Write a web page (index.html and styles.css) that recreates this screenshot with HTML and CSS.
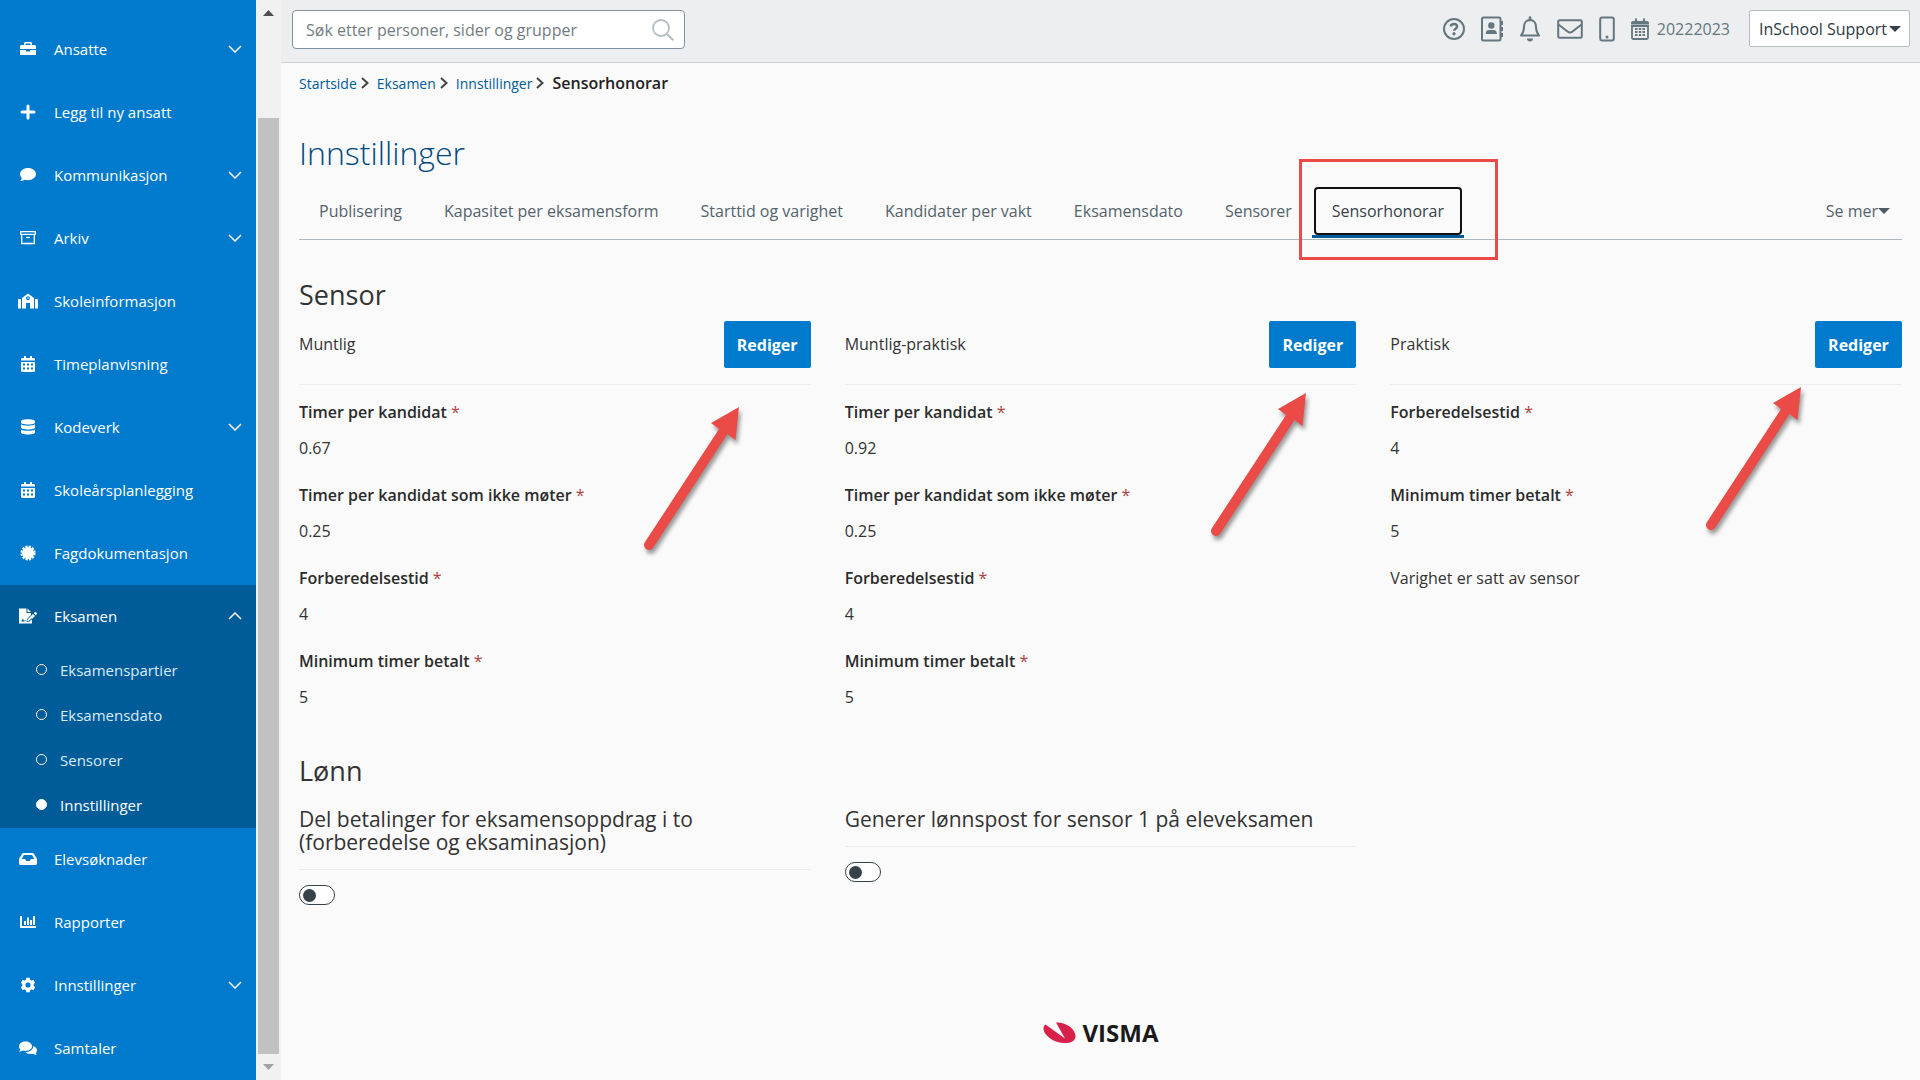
FILE: index.html
```
<!DOCTYPE html>
<html lang="no">
<head>
  <meta charset="UTF-8">
  <title>Sensorhonorar - Innstillinger</title>
  <link rel="stylesheet" href="styles.css">
</head>
<body>

  <!-- shared icons -->
  <svg class="sprite" aria-hidden="true">
    <symbol id="chevron" viewBox="0 0 14 8"><path d="M1 1l6 6 6-6" fill="none" stroke="currentColor" stroke-width="1.5"/></symbol>
    <symbol id="calendar" viewBox="0 0 14 16"><path fill="currentColor" fill-rule="evenodd" d="M0 4.5V3.4C0 2.600 .6 2 1.500 2H3V.5C3 .2 3.200 0 3.500 0h1c.3 0 .5.2.5.5V2h4V.5c0-.3.2-.5.5-.5h1c.3 0 .5.2.5.5V2h1.500c.9 0 1.500.6 1.500 1.400v1.100zM0 6h14v8.500c0 .9-.6 1.500-1.500 1.500h-11C.6 16 0 15.400 0 14.500zM2 7.500v2h2v-2zm4 0v2h2v-2zm4 0v2h2v-2zM2 11.500v2h2v-2zm4 0v2h2v-2zm4 0v2h2v-2z"/></symbol>
    <symbol id="pointer" viewBox="0 0 110 160"><path fill="#ea4b46" d="M97 8L93.500 41 85.500 35 11 149a5 5 0 0 1-8-6L77 30l-8-6z"/></symbol>
  </svg>

  <aside class="sidebar">
    <nav class="menu">
      <a href="#" class="menu-item">
        <svg class="menu-icon" viewBox="0 0 20 16"><path fill="#fff" fill-rule="evenodd" d="M6 4V2.500C6 1.700 6.700 1 7.500 1h5c.8 0 1.500.7 1.500 1.500V4h2.500C17.300 4 18 4.700 18 5.500V8H2V5.500C2 4.700 2.700 4 3.500 4zm1.500 0h5V2.500h-5zM2 9h6v1.500h4V9h6v4c0 .6-.4 1-1 1H3c-.6 0-1-.4-1-1z"/></svg>
        <span>Ansatte</span>
        <svg class="chevron"><use href="#chevron"/></svg>
      </a>
      <a href="#" class="menu-item">
        <svg class="menu-icon" viewBox="0 0 20 16"><path d="M10 2v12M4 8h12" stroke="#fff" stroke-width="3" stroke-linecap="round"/></svg>
        <span>Legg til ny ansatt</span>
      </a>
      <a href="#" class="menu-item">
        <svg class="menu-icon" viewBox="0 0 20 16"><path fill="#fff" d="M10 1c4.400 0 8 2.700 8 6.100s-3.600 6.100-8 6.100c-1.200 0-2.300-.2-3.300-.5C5.600 13.500 4.200 14 2.300 14c.7-.8 1.300-1.800 1.500-2.900C2.700 10 2 8.600 2 7.100 2 3.700 5.600 1 10 1z"/></svg>
        <span>Kommunikasjon</span>
        <svg class="chevron"><use href="#chevron"/></svg>
      </a>
      <a href="#" class="menu-item">
        <svg class="menu-icon" viewBox="0 0 20 16"><path fill="none" stroke="#fff" stroke-width="1.300" d="M2.700 1.700h14.600v2.600H2.700zM3.700 4.500v9h12.600v-9"/><path d="M8 7.500h4" stroke="#fff" stroke-width="1.300"/></svg>
        <span>Arkiv</span>
        <svg class="chevron"><use href="#chevron"/></svg>
      </a>
      <a href="#" class="menu-item">
        <svg class="menu-icon" viewBox="0 0 20 16"><path fill="#fff" fill-rule="evenodd" d="M0 7c0-.6.4-1 1-1h2v9.500H0zM17 6h2c.6 0 1 .4 1 1v8.500h-3zM4 15.500V5l6-4.500L16 5v10.500h-4V10H8v5.500zM10 3.300a2 2 0 1 0 0 4 2 2 0 0 0 0-4zm-.4.800h.8v1h.8v.7H9.600z"/></svg>
        <span>Skoleinformasjon</span>
      </a>
      <a href="#" class="menu-item">
        <svg class="menu-icon"><use href="#calendar"/></svg>
        <span>Timeplanvisning</span>
      </a>
      <a href="#" class="menu-item">
        <svg class="menu-icon" viewBox="0 0 20 16"><path fill="#fff" d="M3 2.300C3 1 6 .3 10 .3s7 .7 7 2v1.200c0 1.300-3 2-7 2s-7-.7-7-2zM3 5.300c1.500 1 4 1.400 7 1.400s5.500-.4 7-1.400v3.200c0 1.300-3 2-7 2s-7-.7-7-2zM3 10.400c1.500 1 4 1.400 7 1.400s5.500-.4 7-1.400v3.200c0 1.300-3 2-7 2s-7-.7-7-2z"/></svg>
        <span>Kodeverk</span>
        <svg class="chevron"><use href="#chevron"/></svg>
      </a>
      <a href="#" class="menu-item">
        <svg class="menu-icon"><use href="#calendar"/></svg>
        <span>Skoleårsplanlegging</span>
      </a>
      <a href="#" class="menu-item">
        <svg class="menu-icon" viewBox="0 0 20 16"><circle cx="10" cy="8" r="6" fill="#fff"/><circle cx="10" cy="8" r="6.500" fill="none" stroke="#fff" stroke-width="2.200" stroke-dasharray="2.200 1.200"/></svg>
        <span>Fagdokumentasjon</span>
      </a>

      <div class="menu-group">
        <a href="#" class="menu-item">
          <svg class="menu-icon" viewBox="0 0 20 16"><path fill="#fff" fill-rule="evenodd" d="M1 .5h7.500V5H13v2l-4 4-.5 2.500H8l-.8-1.500-1.200 1-1-2.500-1.800 3h3.300l.5-.5h3.500l3.500-3V15.500H1zM9.500.5L13 4H9.500zM9.500 11.500l5.500-5.500 2 2-5.500 5.500-2.500.5zM15.700 5.300l1-1c.4-.4.8-.4 1.200 0l.8.8c.4.400.4.800 0 1.200l-1 1z"/></svg>
          <span>Eksamen</span>
          <svg class="chevron chevron-up"><use href="#chevron"/></svg>
        </a>
        <a href="#" class="submenu-item">Eksamenspartier</a>
        <a href="#" class="submenu-item">Eksamensdato</a>
        <a href="#" class="submenu-item">Sensorer</a>
        <a href="#" class="submenu-item current">Innstillinger</a>
      </div>

      <a href="#" class="menu-item">
        <svg class="menu-icon" viewBox="0 0 20 16"><path fill="#fff" fill-rule="evenodd" d="M5.500 2h9c.5 0 .9.200 1.200.6l3 4.600c.2.300.3.600.3.900v4.400c0 .8-.7 1.500-1.500 1.500h-15C1.700 14 1 13.300 1 12.500V8.100c0-.3.100-.6.300-.9l3-4.600c.3-.4.7-.6 1.200-.6zM6 4L3.700 8h3.500l1 2h3.600l1-2h3.500L14 4z"/></svg>
        <span>Elevsøknader</span>
      </a>
      <a href="#" class="menu-item">
        <svg class="menu-icon" viewBox="0 0 20 16"><path fill="#fff" d="M2 2h2v10h14v2H3c-.6 0-1-.4-1-1zM6 7h2v4H6zM9 3.500h2V11H9zM12 6h2v5h-2zM15 2h2v9h-2z"/></svg>
        <span>Rapporter</span>
      </a>
      <a href="#" class="menu-item">
        <svg class="menu-icon" viewBox="0 0 20 16"><circle cx="10" cy="8" r="4.200" fill="none" stroke="#fff" stroke-width="3.200"/><path d="M10 .7v3M10 12.300v3M3.700 4.350l2.600 1.500M13.700 10.150l2.600 1.500M3.700 11.650l2.600-1.500M13.700 5.850l2.600-1.500" stroke="#fff" stroke-width="3.600"/></svg>
        <span>Innstillinger</span>
        <svg class="chevron"><use href="#chevron"/></svg>
      </a>
      <a href="#" class="menu-item">
        <svg class="menu-icon" viewBox="0 0 20 16"><path fill="#fff" d="M7.500 1.500c3.600 0 6.500 2.100 6.500 4.800S11.100 11 7.500 11c-.9 0-1.800-.1-2.600-.4-1 .7-2.300 1.100-3.900 1.100.6-.6 1.100-1.400 1.300-2.100C1.500 8.700 1 7.500 1 6.300c0-2.700 2.900-4.800 6.500-4.800z"/><path fill="#fff" d="M15.200 6c2.200.7 3.800 2.300 3.800 4.200 0 1.100-.5 2-1.300 2.800.2.700.7 1.200 1.300 1.800-1.600 0-2.800-.4-3.900-1.100-.8.200-1.700.3-2.600.3-2.300 0-4.300-.7-5.400-1.900h.4c4.300 0 7.700-2.500 7.700-6.100z"/></svg>
        <span>Samtaler</span>
      </a>
    </nav>
    <div class="scrollbar">
      <svg class="scroll-arrow" viewBox="0 0 11 6"><path d="M0 6l5.500-6L11 6z" fill="#505050"/></svg>
      <div class="scroll-thumb"></div>
      <svg class="scroll-arrow" viewBox="0 0 11 6"><path d="M0 0h11L5.500 6z" fill="#a3a3a3"/></svg>
    </div>
  </aside>

  <div class="page">
    <header class="topbar">
      <form class="search">
        <input type="text" placeholder="Søk etter personer, sider og grupper" aria-label="Søk">
        <button type="button" aria-label="Søk">
          <svg width="22" height="22" viewBox="0 0 22 22" fill="none" stroke="#b4bec4" stroke-width="1.800"><circle cx="9" cy="9" r="8"/><path d="M15 15l6.300 6.300" stroke-width="2.200"/></svg>
        </button>
      </form>

      <div class="tools">
        <a href="#" aria-label="Hjelp">
          <svg width="22" height="22" viewBox="0 0 22 22" fill="none" stroke="#647781"><circle cx="11" cy="11" r="10" stroke-width="2"/><path d="M7.800 8.500C8 6.700 9.400 6 11 6c1.700 0 3.100.9 3.100 2.500 0 2.200-3 2.200-3 4.300" stroke-width="2.400"/><circle cx="11" cy="15.800" r="1.200" fill="#647781"/></svg>
        </a>
        <a href="#" aria-label="Kontakter">
          <svg width="22" height="26" viewBox="0 0 22 26" fill="none" stroke="#647781"><rect x="1" y="1.500" width="18.500" height="23" rx="1.500" stroke-width="2"/><circle cx="10.300" cy="9.500" r="3.200" fill="#647781" stroke="none"/><path d="M4.800 18v-1c0-2 1.500-3 3.200-3h4.600c1.700 0 3.200 1 3.200 3v1z" fill="#647781" stroke="none"/><path d="M21 5v4M21 11v4M21 17v4" stroke-width="2"/></svg>
        </a>
        <a href="#" aria-label="Varsler">
          <svg width="22" height="26" viewBox="0 0 22 26"><path d="M2 19.500c2-2.500 3-4 3-8.500C5 7 7.500 4 11 4s6 3 6 7c0 4.500 1 6 3 8.500z" fill="none" stroke="#647781" stroke-width="2" stroke-linejoin="round"/><path d="M11 1.500v2.500" stroke="#647781" stroke-width="2.600" stroke-linecap="round"/><path d="M8 22.500h6c0 1.700-1.300 3-3 3s-3-1.300-3-3z" fill="#647781"/></svg>
        </a>
        <a href="#" aria-label="Meldinger">
          <svg width="26" height="20" viewBox="0 0 26 20" fill="none" stroke="#647781" stroke-width="2"><rect x="1.200" y="1.200" width="23.600" height="17.600" rx="1.500"/><path d="M1.500 5.500l9 7c1.600 1.300 3.400 1.300 5 0l9-7"/></svg>
        </a>
        <a href="#" aria-label="Mobil">
          <svg width="16" height="26" viewBox="0 0 16 26"><rect x="1.200" y="1.500" width="13.600" height="23" rx="2" fill="none" stroke="#647781" stroke-width="2"/><circle cx="8" cy="21" r="1.500" fill="#647781"/></svg>
        </a>
        <a href="#" class="year">
          <svg width="18" height="22" viewBox="0 0 18 22"><path d="M1 8h16v11.500c0 .8-.5 1.500-1.500 1.500h-13C1.500 21 1 20.300 1 19.500z" fill="none" stroke="#647781" stroke-width="1.800"/><path d="M0 6.500V5c0-1.200.8-2 2-2h2V.5h2V3h6V.5h2V3h2c1.200 0 2 .8 2 2v1.500z" fill="#647781"/><path d="M4 11h10M4 14h10M4 17h10" stroke="#647781" stroke-width="2" stroke-dasharray="2.500 1.250"/></svg>
          <span>20222023</span>
        </a>
        <div class="user">
          <select aria-label="Bruker">
            <option>InSchool Support</option>
          </select>
        </div>
      </div>
    </header>

    <main class="content">
      <nav class="breadcrumb">
        <a href="#">Startside</a>
        <svg viewBox="0 0 8 12"><path d="M1 1l5.500 5L1 11"/></svg>
        <a href="#">Eksamen</a>
        <svg viewBox="0 0 8 12"><path d="M1 1l5.500 5L1 11"/></svg>
        <a href="#">Innstillinger</a>
        <svg viewBox="0 0 8 12"><path d="M1 1l5.500 5L1 11"/></svg>
        <span class="here">Sensorhonorar</span>
      </nav>

      <h1>Innstillinger</h1>

      <nav class="tabs">
        <a href="#" class="tab">Publisering</a>
        <a href="#" class="tab">Kapasitet per eksamensform</a>
        <a href="#" class="tab">Starttid og varighet</a>
        <a href="#" class="tab">Kandidater per vakt</a>
        <a href="#" class="tab">Eksamensdato</a>
        <a href="#" class="tab">Sensorer</a>
        <a href="#" class="tab active"><span class="highlight"></span>Sensorhonorar</a>
        <button class="more">Se mer</button>
      </nav>

      <h2>Sensor</h2>
      <div class="columns fees">
        <section>
          <div class="column-head">
            <span>Muntlig</span>
            <button class="edit-btn">Rediger</button>
            <svg class="pointer"><use href="#pointer"/></svg>
          </div>
          <dl>
            <dt>Timer per kandidat <em>*</em></dt>
            <dd>0.67</dd>
            <dt>Timer per kandidat som ikke møter <em>*</em></dt>
            <dd>0.25</dd>
            <dt>Forberedelsestid <em>*</em></dt>
            <dd>4</dd>
            <dt>Minimum timer betalt <em>*</em></dt>
            <dd>5</dd>
          </dl>
        </section>
        <section>
          <div class="column-head">
            <span>Muntlig-praktisk</span>
            <button class="edit-btn">Rediger</button>
            <svg class="pointer pointer-2"><use href="#pointer"/></svg>
          </div>
          <dl>
            <dt>Timer per kandidat <em>*</em></dt>
            <dd>0.92</dd>
            <dt>Timer per kandidat som ikke møter <em>*</em></dt>
            <dd>0.25</dd>
            <dt>Forberedelsestid <em>*</em></dt>
            <dd>4</dd>
            <dt>Minimum timer betalt <em>*</em></dt>
            <dd>5</dd>
          </dl>
        </section>
        <section>
          <div class="column-head">
            <span>Praktisk</span>
            <button class="edit-btn">Rediger</button>
            <svg class="pointer pointer-3"><use href="#pointer"/></svg>
          </div>
          <dl>
            <dt>Forberedelsestid <em>*</em></dt>
            <dd>4</dd>
            <dt>Minimum timer betalt <em>*</em></dt>
            <dd>5</dd>
          </dl>
          <p class="note">Varighet er satt av sensor</p>
        </section>
      </div>

      <h2>Lønn</h2>
      <div class="columns">
        <section class="setting">
          <label for="splitPayment">Del betalinger for eksamensoppdrag i to (forberedelse og eksaminasjon)</label>
          <input type="checkbox" id="splitPayment" class="switch">
        </section>
        <section class="setting">
          <label for="generateEntry">Generer lønnspost for sensor 1 på eleveksamen</label>
          <input type="checkbox" id="generateEntry" class="switch">
        </section>
      </div>
    </main>

    <footer class="footer">
      <svg width="34" height="22" viewBox="0 0 34 22"><path fill="#d8214a" d="M2.500 2.500L22 16.500 13 .5C22-.5 32 6.500 32.500 13.500 33 19 27 21.500 20.500 21 10 20.500.5 13 .5 6.500.5 5 1.200 3.500 2.500 2.500z"/></svg>
      <span>VISMA</span>
    </footer>
  </div>

</body>
</html>
```
FILE: styles.css
```
* { box-sizing: border-box; }
body {
  margin: 0;
  display: flex;
  min-height: 100vh;
  font-family: "Open Sans", sans-serif;
  font-size: 16px;
  color: #333;
  background-color: #fafafa;
}
a { text-decoration: none; }
button, input, select { font-family: inherit; font-size: 16px; }
.sprite { position: absolute; width: 0; height: 0; }

/* sidebar */
.sidebar { display: flex; flex: none; }
.menu { width: 256px; padding-top: 18px; background-color: #007acc; }
.menu-item {
  display: flex;
  align-items: center;
  gap: 16px;
  height: 63px;
  padding: 0 14px 2px 18px;
  font-size: 15px;
  font-weight: 500;
  color: #fff;
}
.menu-icon { width: 20px; height: 16px; }
.chevron { width: 14px; height: 8px; margin-left: auto; }
.chevron-up { transform: rotate(180deg); }
.menu-group { background-color: #005b99; }
.submenu-item {
  display: flex;
  align-items: center;
  gap: 13px;
  height: 45px;
  padding: 0 0 2px 36px;
  font-size: 15px;
  color: #d9ecf8;
}
.submenu-item::before {
  content: "";
  box-sizing: border-box;
  width: 11px;
  height: 11px;
  border: 1px solid #fff;
  border-radius: 50%;
}
.submenu-item.current { color: #fff; font-weight: 500; }
.submenu-item.current::before { background-color: #fff; }

.scrollbar {
  display: flex;
  flex-direction: column;
  align-items: center;
  width: 25px;
  padding: 10px 0;
  background-color: #f1f1f1;
}
.scroll-arrow { width: 11px; height: 6px; }
.scroll-thumb { flex: 1; width: 21px; margin: 102px 0 10px; background-color: #c1c1c1; }

/* top bar */
.page { display: flex; flex-direction: column; flex: 1; min-width: 0; }
.topbar {
  display: flex;
  justify-content: space-between;
  align-items: flex-start;
  height: 63px;
  padding: 10px 10px 0 11px;
  background-color: #eceeef;
  border-bottom: 1px solid #ccd2d6;
}
.search {
  display: flex;
  align-items: center;
  width: 393px;
  height: 39px;
  padding: 0 10px 0 13px;
  background-color: #fff;
  border: 1px solid #7f929d;
  border-radius: 4px;
}
.search input { flex: 1; padding: 0; border: none; outline: none; background: none; }
.search input::placeholder { color: #717c82; }
.search button { display: flex; padding: 0; border: none; background: none; cursor: pointer; }
.tools { display: flex; align-items: center; gap: 16px; height: 37px; }
.tools a { display: flex; align-items: center; color: #647781; }
.tools .year { gap: 8px; }
.user { position: relative; margin-left: 3px; }
.user select {
  appearance: none;
  width: 161px;
  height: 37px;
  padding: 0 0 0 9px;
  font-weight: 500;
  color: #2d3a42;
  background-color: #fff;
  border: 1px solid #b4bec4;
  border-radius: 2px;
}
.user::after {
  content: "";
  position: absolute;
  top: 16px;
  right: 9px;
  border: 6px solid transparent;
  border-top-color: #36424a;
  border-bottom: none;
}

/* content */
.content { flex: 1; padding: 8px 18px 0; }
.breadcrumb { display: flex; align-items: center; gap: 4px; height: 24px; }
.breadcrumb a { font-size: 14px; color: #005b99; }
.breadcrumb svg { width: 8px; height: 12px; margin-right: 4px; fill: none; stroke: #444; stroke-width: 2; }
.here { font-weight: 600; color: #222; }
h1 { margin: 36px 0 11px; font-size: 32px; line-height: 44px; font-weight: 300; color: #004880; }
h2 { margin: 0; font-size: 27px; line-height: 36px; font-weight: 400; }

.tabs {
  display: flex;
  gap: 2px;
  height: 54px;
  margin-bottom: 37px;
  border-bottom: 1px solid #b0b9be;
}
.tab {
  position: relative;
  display: flex;
  align-items: center;
  height: 52px;
  padding: 0 20px 2px;
  color: #54636b;
}
.tab.active { margin-left: -2px; color: #36424a; border-bottom: 3px solid #005b99; padding-bottom: 0; }
.tab.active::before {
  content: "";
  position: absolute;
  inset: 1px 2px 0;
  border: 2px solid #111;
  border-radius: 4px;
}
.highlight {
  position: absolute;
  inset: -27px -34px -25px -13px;
  border: 3px solid #ea4b46;
}
.more {
  display: flex;
  align-items: center;
  height: 50px;
  margin-left: auto;
  padding: 0 12px;
  color: #54636b;
  background: none;
  border: none;
  cursor: pointer;
}
.more::after {
  content: "";
  border: 6px solid transparent;
  border-top-color: #4c5b64;
  border-bottom: none;
}

.columns { display: grid; grid-template-columns: repeat(3, 1fr); gap: 34px; }
.fees { margin: 8px 0 21px; }
.column-head {
  position: relative;
  display: flex;
  justify-content: space-between;
  align-items: flex-start;
  line-height: 46px;
  padding-bottom: 16px;
  border-bottom: 1px solid #ededee;
}
.edit-btn {
  width: 87px;
  height: 47px;
  padding: 0;
  font-weight: 700;
  color: #fff;
  background-color: #007acc;
  border: none;
  border-radius: 2px;
  cursor: pointer;
}
dl { margin: 15px 0 0; line-height: 24px; }
dt { font-weight: 600; color: #2b2b2b; }
dt em { font-style: normal; font-weight: 400; color: #a94442; }
dd { margin: 12px 0 23px; }
.note { margin: 0; line-height: 24px; }

/* arrows over the columns */
.pointer {
  position: absolute;
  top: 78px;
  right: 59px;
  width: 110px;
  height: 160px;
  filter: drop-shadow(2px 4px 2px rgba(0, 0, 0, 0.4));
}
.pointer-2 { top: 64px; right: 37px; }
.pointer-3 { top: 58px; right: 88px; }

.setting { margin-top: 19px; }
.setting label {
  display: block;
  padding-bottom: 15px;
  margin-bottom: 15px;
  font-size: 21px;
  line-height: 23px;
  border-bottom: 1px solid #ededee;
}
.switch {
  appearance: none;
  display: flex;
  align-items: center;
  width: 36px;
  height: 20px;
  margin: 0;
  padding: 0 3px;
  background-color: #fff;
  border: 1px solid #36424a;
  border-radius: 10px;
  cursor: pointer;
}
.switch::before {
  content: "";
  width: 13px;
  height: 13px;
  border-radius: 50%;
  background-color: #36424a;
}
.switch:checked::before { margin-left: auto; }

.footer {
  display: flex;
  justify-content: center;
  align-items: center;
  gap: 6px;
  height: 94px;
}
.footer span {
  font-size: 24px;
  line-height: 26px;
  font-weight: 700;
  color: #1a1a1a;
}
```
